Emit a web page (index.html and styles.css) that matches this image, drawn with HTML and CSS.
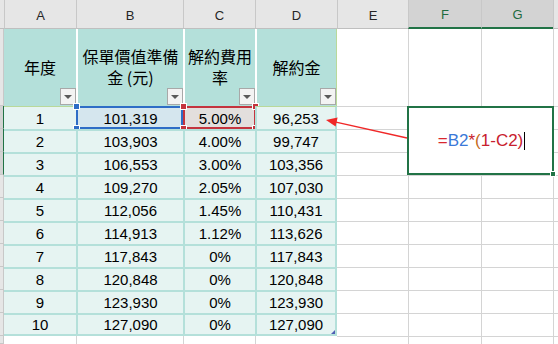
FILE: index.html
```html
<!DOCTYPE html>
<html lang="zh-Hant">
<head>
<meta charset="utf-8">
<title>解約金</title>
<link rel="stylesheet" href="styles.css">
</head>
<body>
<div class="sheet">
  <!-- column header row -->
  <div class="corner"></div>
  <div class="ch">A</div>
  <div class="ch">B</div>
  <div class="ch">C</div>
  <div class="ch">D</div>
  <div class="ch">E</div>
  <div class="ch sel">F</div>
  <div class="ch sel">G</div>
  <div class="ch h"></div>

  <!-- row 1: table header -->
  <div class="rh"></div>
  <div class="th first"><span>年度</span><i class="btn"></i></div>
  <div class="th"><span>保單價值準備<br>金 (元)</span><i class="btn"></i></div>
  <div class="th"><span>解約費用<br>率</span><i class="btn"></i></div>
  <div class="th last"><span>解約金</span><i class="btn"></i></div>
  <div class="gc nol not"></div>
  <div class="gc not"></div>
  <div class="gc not"></div>
  <div class="gc not"></div>

  <!-- in-cell editor spanning F2:G4 -->
  <div class="editor">
    <span class="formula"><span class="f-eq">=</span><span class="f-b">B2</span><span class="f-op">*</span><span class="f-par">(</span><span class="f-op">1-</span><span class="f-c">C2</span><span class="f-op">)</span></span><i class="caret"></i>
    <i class="fill"></i>
  </div>

  <!-- data row 1 -->
  <div class="rh sel"></div>
  <div class="td first r1">1</div>
  <div class="td r1 selb">101,319<b class="box blue"><i class="hd tl"></i><i class="hd bl"></i></b></div>
  <div class="td r1 selc">5.00%<b class="box red"><i class="hd tl"></i><i class="hd bl"></i><i class="hd tr"></i><i class="hd br"></i></b></div>
  <div class="td last r1">96,253</div>
  <div class="gc nol"></div>
  <div class="gc"></div>

  <div class="rh sel"></div>
  <div class="td first">2</div>
  <div class="td">103,903</div>
  <div class="td">4.00%</div>
  <div class="td last">99,747</div>
  <div class="gc nol"></div>
  <div class="gc"></div>

  <div class="rh sel"></div>
  <div class="td first">3</div>
  <div class="td">106,553</div>
  <div class="td">3.00%</div>
  <div class="td last">103,356</div>
  <div class="gc nol"></div>
  <div class="gc"></div>

  <div class="rh"></div>
  <div class="td first">4</div>
  <div class="td">109,270</div>
  <div class="td">2.05%</div>
  <div class="td last">107,030</div>
  <div class="gc nol"></div>
  <div class="gc"></div>
  <div class="gc"></div>
  <div class="gc"></div>

  <div class="rh"></div>
  <div class="td first">5</div>
  <div class="td">112,056</div>
  <div class="td">1.45%</div>
  <div class="td last">110,431</div>
  <div class="gc nol"></div>
  <div class="gc"></div>
  <div class="gc"></div>
  <div class="gc"></div>

  <div class="rh"></div>
  <div class="td first">6</div>
  <div class="td">114,913</div>
  <div class="td">1.12%</div>
  <div class="td last">113,626</div>
  <div class="gc nol"></div>
  <div class="gc"></div>
  <div class="gc"></div>
  <div class="gc"></div>

  <div class="rh"></div>
  <div class="td first">7</div>
  <div class="td">117,843</div>
  <div class="td">0%</div>
  <div class="td last">117,843</div>
  <div class="gc nol"></div>
  <div class="gc"></div>
  <div class="gc"></div>
  <div class="gc"></div>

  <div class="rh"></div>
  <div class="td first">8</div>
  <div class="td">120,848</div>
  <div class="td">0%</div>
  <div class="td last">120,848</div>
  <div class="gc nol"></div>
  <div class="gc"></div>
  <div class="gc"></div>
  <div class="gc"></div>

  <div class="rh"></div>
  <div class="td first">9</div>
  <div class="td">123,930</div>
  <div class="td">0%</div>
  <div class="td last">123,930</div>
  <div class="gc nol"></div>
  <div class="gc"></div>
  <div class="gc"></div>
  <div class="gc"></div>

  <div class="rh"></div>
  <div class="td first r10">10</div>
  <div class="td r10">127,090</div>
  <div class="td r10">0%</div>
  <div class="td last r10">127,090<i class="resize"></i></div>
  <div class="gc nol"></div>
  <div class="gc"></div>
  <div class="gc"></div>
  <div class="gc"></div>

  <!-- row 12 -->
  <div class="rh"></div>
  <div class="gc nol not"></div>
  <div class="gc not"></div>
  <div class="gc not"></div>
  <div class="gc not"></div>
  <div class="gc nol"></div>
  <div class="gc"></div>
  <div class="gc"></div>
  <div class="gc"></div>

  <svg class="arrow" width="558" height="344" viewBox="0 0 558 344">
    <line x1="407" y1="138" x2="336" y2="122.2" stroke="#f02828" stroke-width="1.3"/>
    <polygon points="326,120 337.6,117.5 335.6,126.6" fill="#f02828"/>
  </svg>
</div>
</body>
</html>
```

FILE: styles.css
```css
* { box-sizing: border-box; }

html, body {
  margin: 0;
  padding: 0;
  background: #ffffff;
  overflow: hidden;
}

.sheet {
  position: relative;
  display: grid;
  grid-template-columns: 4px 72px 107px 72px 82px 71px 73px 72px 5px;
  grid-template-rows: 29px 77px repeat(10, 23px) 8px;
  width: 558px;
  height: 344px;
  font-family: "Liberation Sans", Arial, sans-serif;
  color: #000;
}

/* column headers */
.corner {
  background: #e6e6e6;
  border-bottom: 1px solid #bfbfbf;
}
.ch {
  background: #e6e6e6;
  border-left: 1px solid #c8c8c8;
  border-bottom: 1px solid #bfbfbf;
  font-size: 13px;
  color: #262626;
  display: flex;
  align-items: center;
  justify-content: center;
  padding-top: 2px;
}
.ch.sel {
  background: #d3d3d3;
  color: #1e6b3f;
  border-bottom: 2px solid #217346;
}

/* row headers */
.rh {
  background: #e6e6e6;
  border-bottom: 1px solid #c8c8c8;
  border-right: 1px solid #c8c8c8;
}
.rh.sel {
  background: #d3d3d3;
  border-right: 1px solid #217346;
}

/* table header cells */
.th {
  position: relative;
  background: #b4e0da;
  border-left: 2px solid #ffffff;
  display: flex;
  align-items: center;
  justify-content: center;
  text-align: center;
  font-family: "Noto Sans CJK TC", "Noto Sans", sans-serif;
  font-size: 16px;
  line-height: 21px;
  padding-bottom: 1px;
}
.th.first { border-left: none; }
.th.last { border-right: 1px solid #b9d99a; }

.btn {
  position: absolute;
  right: 0;
  bottom: 1px;
  width: 16px;
  height: 17px;
  background: #f3f3f3;
  border: 1px solid #a8a8a8;
}
.btn::after {
  content: "";
  position: absolute;
  left: 3px;
  top: 6px;
  border-left: 4px solid transparent;
  border-right: 4px solid transparent;
  border-top: 4px solid #5a5a5a;
}

/* data cells */
.td {
  position: relative;
  background: #e6f4f2;
  border-left: 2px solid #b4e0da;
  border-top: 2px solid #b4e0da;
  display: flex;
  align-items: center;
  justify-content: center;
  font-size: 15px;
}
.td.first { border-left: none; }
.td.last { border-right: 2px solid #b4e0da; }
.td.r1 { border-top: 1px solid #b9d99a; }
.td.r10 { border-bottom: 2px solid #b4e0da; }

.td.selb { background: #d5e6ee; }
.td.selc { background: #e3dfdd; }

.box {
  position: absolute;
  top: -1px;
  left: -2px;
  right: 0;
  bottom: 0;
  border: 2px solid #2e6dc6;
}
.box.red {
  right: -1px;
  border-color: #c4343e;
}
.hd {
  position: absolute;
  width: 7px;
  height: 7px;
  background: #2e6dc6;
  border: 1px solid #ffffff;
}
.red .hd { background: #c4343e; }
.hd.tl { left: -5px; top: -5px; }
.hd.bl { left: -5px; bottom: -5px; }
.hd.tr { right: -5px; top: -5px; }
.hd.br { right: -5px; bottom: -5px; }

.resize {
  position: absolute;
  right: 0;
  bottom: 0;
  width: 0;
  height: 0;
  border-left: 4px solid transparent;
  border-bottom: 4px solid #4f5fb4;
}

/* plain grid cells */
.gc {
  background: #ffffff;
  border-left: 1px solid #d4d4d4;
  border-top: 1px solid #d4d4d4;
}
.gc.nol { border-left: none; }
.gc.not { border-top: none; }

/* in-cell editor */
.editor {
  grid-column: 7 / 9;
  grid-row: 3 / 6;
  position: relative;
  z-index: 2;
  margin: 0 -1px 0 -1px;
  background: #ffffff;
  border: 2px solid #217346;
  display: flex;
  align-items: center;
  justify-content: center;
  font-size: 17px;
  padding-left: 2px;
}
.formula { line-height: 20px; }
.f-eq { color: #d9262e; }
.f-b { color: #3a78d8; }
.f-op { color: #c8202e; }
.f-par { color: #c46a1a; }
.f-c { color: #c8202e; }
.caret {
  display: block;
  width: 1px;
  height: 18px;
  margin-left: 1px;
  background: #000;
}
.fill {
  position: absolute;
  right: -4px;
  bottom: -4px;
  width: 6px;
  height: 6px;
  background: #217346;
  border: 1px solid #ffffff;
}

.arrow {
  position: absolute;
  left: 0;
  top: 0;
  z-index: 3;
  pointer-events: none;
}
```
